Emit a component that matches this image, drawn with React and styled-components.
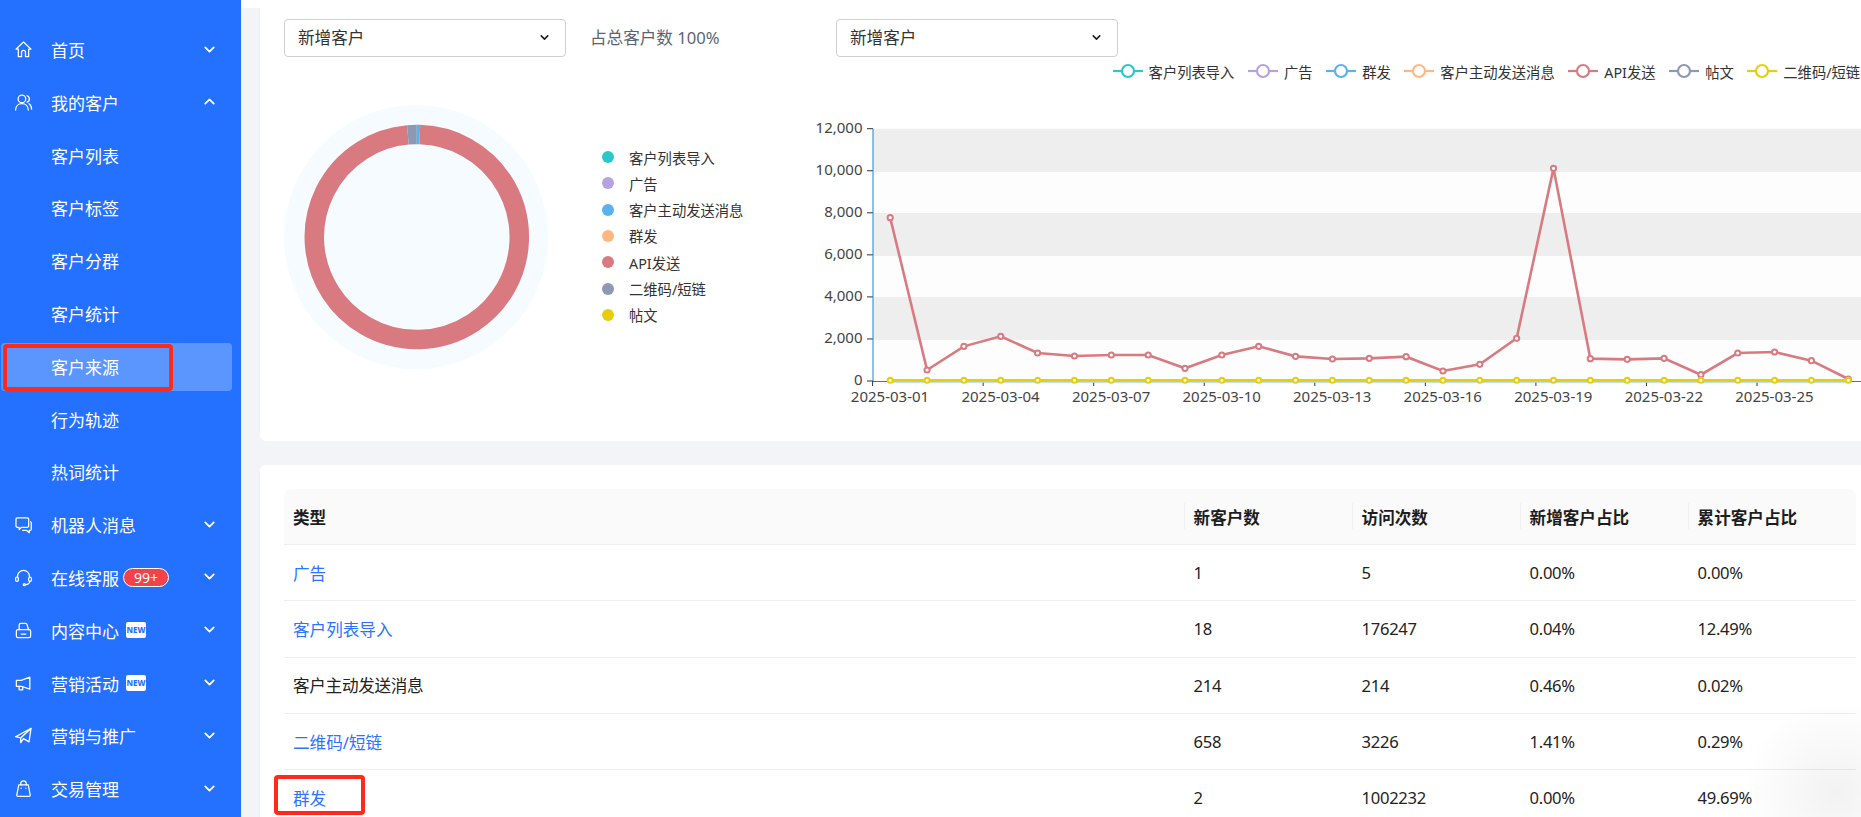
import React from "react";
import styled, { createGlobalStyle } from "styled-components";
import { ChevronDown, ChevronUp } from "lucide-react";

const FONT = `"Noto Sans", "Noto Sans CJK SC", sans-serif`;

const COLORS = {
  teal: "#2ec7c9",
  purple: "#b6a2de",
  blue: "#5ab1ef",
  orange: "#ffb980",
  red: "#d87a80",
  slate: "#8d98b3",
  yellow: "#e5cf0d",
};

const Icon = ({ children }) => (
  <IconSvg viewBox="0 0 24 24" fill="none" stroke="#fff" strokeWidth="1.6" strokeLinejoin="round" strokeLinecap="round">
    {children}
  </IconSvg>
);

const menu = [
  {
    label: "首页",
    icon: <path d="M2.5 11.5 12 2.5l9.5 9H18.500V21h-4v-5.500a2.500 2.500 0 0 0-5 0V21h-4v-9.500z" />,
    arrow: "down",
  },
  {
    label: "我的客户",
    icon: (
      <>
        <circle cx="10" cy="7.500" r="4.800" />
        <path d="M2 21.500c0-5 3.500-8 8-8s8 3 8 8M16.500 3.500a4.200 4.200 0 0 1 0 8M19 13.500c2 1.200 3.200 4 3.200 7" />
      </>
    ),
    arrow: "up",
  },
  { label: "客户列表" },
  { label: "客户标签" },
  { label: "客户分群" },
  { label: "客户统计" },
  { label: "客户来源", active: true },
  { label: "行为轨迹" },
  { label: "热词统计" },
  {
    label: "机器人消息",
    icon: (
      <>
        <path d="M4 3.500h13a1.500 1.500 0 0 1 1.500 1.500v9a1.500 1.500 0 0 1-1.500 1.500H9.500L6.500 18.500v-3H4A1.500 1.500 0 0 1 2.500 14V5A1.500 1.500 0 0 1 4 3.500z" />
        <path d="M21 8.500c.5.300.8.800.8 1.300V18c0 .8-.7 1.500-1.500 1.500h-1v2.800l-3.300-2.800h-5" />
      </>
    ),
    arrow: "down",
  },
  {
    label: "在线客服",
    icon: (
      <>
        <path d="M4.500 12V10.500a7.500 7.500 0 0 1 15 0V12" />
        <rect x="2" y="11.500" width="3.500" height="5.500" rx="1.700" />
        <rect x="18.500" y="11.500" width="3.500" height="5.500" rx="1.700" />
        <path d="M20 17c-.5 2.500-2.500 4-5.500 4" />
        <circle cx="13" cy="21" r="1.300" />
      </>
    ),
    arrow: "down",
    badge: "99+",
  },
  {
    label: "内容中心",
    icon: (
      <>
        <path d="M6.500 11V5a2 2 0 0 1 2-2h6a2 2 0 0 1 2 1.500L18.500 11" />
        <rect x="3" y="11" width="18" height="10" rx="2" />
        <path d="M9 16.500h6" />
      </>
    ),
    arrow: "down",
    isNew: true,
  },
  {
    label: "营销活动",
    icon: (
      <>
        <path d="M3 8h6l11-4v15l-11-3.500H3z" />
        <path d="M6.500 15.500V20h4.500v-4" />
      </>
    ),
    arrow: "down",
    isNew: true,
  },
  {
    label: "营销与推广",
    icon: (
      <>
        <path d="M21.500 3 2 13.500l6.500 1.500z" />
        <path d="M21.500 3 19 20l-7-4-3.500 5v-6z" />
      </>
    ),
    arrow: "down",
  },
  {
    label: "交易管理",
    icon: (
      <>
        <path d="M6 7.500h12l2.500 13a1.500 1.500 0 0 1-1.500 1.500H5a1.500 1.500 0 0 1-1.500-1.500z" />
        <path d="M8.500 7.500V6a3.500 3.500 0 0 1 7 0v1.500M9 11.500v.2M15 11.500v.2" />
      </>
    ),
    arrow: "down",
  },
];

const pieLegend = [
  ["客户列表导入", COLORS.teal],
  ["广告", COLORS.purple],
  ["客户主动发送消息", COLORS.blue],
  ["群发", COLORS.orange],
  ["API发送", COLORS.red],
  ["二维码/短链", COLORS.slate],
  ["帖文", COLORS.yellow],
];

const lineLegend = [
  ["客户列表导入", COLORS.teal],
  ["广告", COLORS.purple],
  ["群发", COLORS.blue],
  ["客户主动发送消息", COLORS.orange],
  ["API发送", COLORS.red],
  ["帖文", COLORS.slate],
  ["二维码/短链", COLORS.yellow],
];

const apiData = [
  7767, 523, 1648, 2124, 1331, 1189, 1236, 1236, 602, 1236, 1648, 1173, 1046, 1078, 1157, 475, 792, 2029, 10113, 1062,
  1030, 1078, 301, 1331, 1379, 967, 95,
];

const rows = [
  { type: "广告", link: true, cells: ["1", "5", "0.00%", "0.00%"] },
  { type: "客户列表导入", link: true, cells: ["18", "176247", "0.04%", "12.49%"] },
  { type: "客户主动发送消息", cells: ["214", "214", "0.46%", "0.02%"] },
  { type: "二维码/短链", link: true, cells: ["658", "3226", "1.41%", "0.29%"] },
  { type: "群发", link: true, marked: true, cells: ["2", "1002232", "0.00%", "49.69%"] },
];

const Y0 = 381;
const YTOP = 128.7;
const PX = (i) => 890.2 + i * 36.85;
const PY = (v) => Y0 - (v / 12000) * (Y0 - YTOP);
const DATES = ["01", "04", "07", "10", "13", "16", "19", "22", "25"];

const Donut = () => {
  const cx = 132.8;
  const cy = 132;
  const r = 102.5;
  const arc = (a0, a1) => {
    const p = (a) => [cx + r * Math.sin((a * Math.PI) / 180), cy - r * Math.cos((a * Math.PI) / 180)];
    const [x0, y0] = p(a0);
    const [x1, y1] = p(a1);
    return `M${x0} ${y0}A${r} ${r} 0 ${a1 - a0 > 180 ? 1 : 0} 1 ${x1} ${y1}`;
  };
  return (
    <DonutSvg viewBox="0 0 264 264">
      <circle cx="132" cy="132" r="132" fill="#f5fbff" />
      <path d={arc(1.7, 355)} stroke={COLORS.red} strokeWidth="19.500" fill="none" />
      <path d={arc(355, 360)} stroke={COLORS.slate} strokeWidth="19.500" fill="none" />
      <path d={arc(0, 1.7)} stroke={COLORS.blue} strokeWidth="19.500" fill="none" />
    </DonutSvg>
  );
};

const LineChart = () => {
  const bands = [
    [128.7, 172, "#eeeeee"],
    [172, 213, "#fdfdfd"],
    [213, 256, "#eeeeee"],
    [256, 297, "#fdfdfd"],
    [297, 340, "#eeeeee"],
    [340, 381, "#fdfdfd"],
  ];
  return (
    <ChartSvg viewBox="800 100 1061 320">
      {bands.map(([y0, y1, c]) => (
        <rect key={y0} x="873" y={y0} width="990" height={y1 - y0} fill={c} />
      ))}
      {[0, 2000, 4000, 6000, 8000, 10000, 12000].map((v) => (
        <g key={v}>
          <line x1="867" x2="873" y1={PY(v)} y2={PY(v)} stroke="#333" />
          <AxisText x="862.500" y={PY(v) + 4} textAnchor="end">
            {v.toLocaleString("en-US")}
          </AxisText>
        </g>
      ))}
      <line x1="873" x2="873" y1={YTOP} y2={Y0} stroke="#1a87c9" strokeWidth="1" />
      <line x1="873" x2="1861" y1={Y0 + 0.5} y2={Y0 + 0.5} stroke="#1a87c9" strokeWidth="1" />
      {DATES.map((d, i) => (
        <g key={d}>
          <line x1={872.6 + i * 110.55} x2={872.6 + i * 110.55} y1={Y0} y2={Y0 + 5} stroke="#333" />
          <AxisText x={890 + i * 110.55} y="402" textAnchor="middle">
            2025-03-{d}
          </AxisText>
        </g>
      ))}
      <polyline
        points={apiData.map((v, i) => `${PX(i)},${PY(v)}`).join(" ")}
        fill="none"
        stroke={COLORS.red}
        strokeWidth="2.600"
      />
      {apiData.map((v, i) => (
        <circle key={i} cx={PX(i)} cy={PY(v)} r="2.600" fill="#fff" stroke={COLORS.red} strokeWidth="2" />
      ))}
      <line x1={PX(0)} x2={PX(26)} y1="381.800" y2="381.800" stroke="#a9d8f5" strokeWidth="2" />
      <line x1={PX(0)} x2={PX(26)} y1="380.300" y2="380.300" stroke={COLORS.yellow} strokeWidth="2.800" />
      {apiData.map((_, i) => (
        <circle key={i} cx={PX(i)} cy="380.300" r="2.500" fill="#fff" stroke={COLORS.yellow} strokeWidth="2" />
      ))}
    </ChartSvg>
  );
};

const App = () => {
  return (
    <>
      <GlobalStyle />
      <Page>
        <Sidebar>
          {menu.map((item) => (
            <MenuItem key={item.label} $active={item.active}>
              <IconSlot>{item.icon && <Icon>{item.icon}</Icon>}</IconSlot>
              <MenuLabel>{item.label}</MenuLabel>
              {item.badge && <CountBadge>{item.badge}</CountBadge>}
              {item.isNew && <NewTag>NEW</NewTag>}
              {item.arrow === "down" && (
                <Arrow>
                  <ChevronDown size={17} strokeWidth={2.5} />
                </Arrow>
              )}
              {item.arrow === "up" && (
                <Arrow>
                  <ChevronUp size={17} strokeWidth={2.5} />
                </Arrow>
              )}
              {item.active && <MenuMark />}
            </MenuItem>
          ))}
        </Sidebar>
        <Main>
          <ChartCard>
            <PieColumn>
              <Controls>
                <Select $width={282}>
                  新增客户
                  <ChevronDown size={13} strokeWidth={3} color="#222" />
                </Select>
                <Ratio>占总客户数 100%</Ratio>
              </Controls>
              <PieRow>
                <Donut />
                <PieLegend>
                  {pieLegend.map(([name, color]) => (
                    <PieLegendItem key={name}>
                      <Dot $color={color} />
                      {name}
                    </PieLegendItem>
                  ))}
                </PieLegend>
              </PieRow>
            </PieColumn>
            <LineColumn>
              <Select $width={282}>
                新增客户
                <ChevronDown size={13} strokeWidth={3} color="#222" />
              </Select>
              <LineLegend>
                {lineLegend.map(([name, color]) => (
                  <LineLegendItem key={name}>
                    <svg width="30" height="16" viewBox="0 0 30 16">
                      <line x1="0" x2="30" y1="8" y2="8" stroke={color} strokeWidth="2.200" />
                      <circle cx="15" cy="8" r="6" fill="#fff" stroke={color} strokeWidth="2.200" />
                    </svg>
                    {name}
                  </LineLegendItem>
                ))}
              </LineLegend>
              <LineChart />
            </LineColumn>
          </ChartCard>
          <TableCard>
            <Table>
              <colgroup>
                <col style={{ width: 899.6 }} />
                <col />
                <col />
                <col />
                <col />
              </colgroup>
              <thead>
                <tr>
                  <Th>类型</Th>
                  <Th $split>新客户数</Th>
                  <Th $split>访问次数</Th>
                  <Th $split>新增客户占比</Th>
                  <Th $split>累计客户占比</Th>
                </tr>
              </thead>
              <tbody>
                {rows.map((r) => (
                  <tr key={r.type}>
                    <Td $link={r.link}>
                      {r.type}
                      {r.marked && <RowMark />}
                    </Td>
                    {r.cells.map((c, i) => (
                      <Td key={i}>{c}</Td>
                    ))}
                  </tr>
                ))}
              </tbody>
            </Table>
            <CornerGlow />
          </TableCard>
        </Main>
      </Page>
    </>
  );
};

const GlobalStyle = createGlobalStyle`
  html, body {
    margin: 0;
    padding: 0;
    height: 100%;
    overflow: hidden;
    font-family: ${FONT};
  }
  #root {
    height: 100%;
  }
`;

const Page = styled.div`
  display: flex;
  width: 1861px;
  height: 817px;
  overflow: hidden;
`;

const Sidebar = styled.aside`
  flex: 0 0 241px;
  box-sizing: border-box;
  padding-top: 26.5px;
  background: #2470ff;
  overflow: hidden;
`;

const MenuItem = styled.div`
  position: relative;
  display: flex;
  align-items: center;
  box-sizing: border-box;
  height: 48px;
  margin: 0 9px 4.8px 1px;
  padding: 0 0 2px 13px;
  border-radius: 4px;
  color: #fff;
  background: ${(p) => (p.$active ? "#5b96ff" : "transparent")};
`;

const IconSlot = styled.span`
  display: flex;
  flex: 0 0 19px;
  height: 19px;
  margin-right: 18px;
`;

const IconSvg = styled.svg`
  width: 19px;
  height: 19px;
`;

const MenuLabel = styled.span`
  font-size: 17px;
`;

const CountBadge = styled.span`
  box-sizing: border-box;
  width: 46px;
  height: 19px;
  margin-left: 4px;
  border: 1px solid #fff;
  border-radius: 10px;
  background: #f5424a;
  color: #fff;
  font-size: 14px;
  line-height: 17px;
  text-align: center;
`;

const NewTag = styled.span`
  width: 20px;
  height: 16px;
  margin-left: 7px;
  border-radius: 2px;
  background: #fff;
  color: #2470ff;
  font-size: 8px;
  font-weight: 800;
  line-height: 16px;
  text-align: center;
`;

const Arrow = styled.span`
  position: absolute;
  left: 200px;
  top: 14px;
  display: flex;
`;

const MenuMark = styled.span`
  position: absolute;
  left: 2px;
  top: 1px;
  box-sizing: border-box;
  width: 170px;
  height: 47px;
  border: 4px solid #ff2a1a;
  border-radius: 4px;
`;

const Main = styled.main`
  flex: 1;
  min-width: 0;
  display: flex;
  flex-direction: column;
  gap: 24px;
  padding-left: 19px;
  background: linear-gradient(#fff 8px, #f3f4f8 8px);
`;

const ChartCard = styled.section`
  display: flex;
  flex: 0 0 441px;
  box-sizing: border-box;
  padding: 19px 0 0 24px;
  background: #fff;
  border-bottom-left-radius: 6px;
  overflow: hidden;
`;

const PieColumn = styled.div`
  flex: 0 0 552px;
`;

const Controls = styled.div`
  display: flex;
  align-items: center;
`;

const Select = styled.div`
  display: flex;
  align-items: center;
  justify-content: space-between;
  box-sizing: border-box;
  width: ${(p) => p.$width}px;
  height: 38px;
  padding: 0 14px 2px 13px;
  border: 1px solid #cfd0d4;
  border-radius: 4px;
  background: #fff;
  color: #333;
  font-size: 16.6px;
`;

const Ratio = styled.span`
  margin-left: 24px;
  padding-bottom: 2px;
  color: #5a6474;
  font-size: 16.6px;
`;

const PieRow = styled.div`
  display: flex;
  align-items: center;
  margin-top: 48px;
`;

const DonutSvg = styled.svg`
  flex: 0 0 264px;
  width: 264px;
  height: 264px;
`;

const PieLegend = styled.ul`
  margin: -2px 0 0 54px;
  padding: 0;
  list-style: none;
`;

const PieLegendItem = styled.li`
  display: flex;
  align-items: center;
  height: 26.3px;
  color: #333;
  font-size: 14.3px;
  white-space: nowrap;
`;

const Dot = styled.i`
  width: 12px;
  height: 12px;
  margin-right: 15px;
  border-radius: 50%;
  background: ${(p) => p.$color};
`;

const LineColumn = styled.div`
  flex: 1;
  min-width: 0;
`;

const LineLegend = styled.div`
  display: flex;
  gap: 13.6px;
  height: 20px;
  margin: 4px 0 0 276.6px;
  white-space: nowrap;
`;

const LineLegendItem = styled.div`
  display: flex;
  align-items: center;
  gap: 6px;
  flex: none;
  color: #333;
  font-size: 14.3px;
`;

const ChartSvg = styled.svg`
  display: block;
  width: 1061px;
  height: 320px;
  margin: 19px 0 0 -36px;
`;

const AxisText = styled.text`
  fill: #444;
  font-family: ${FONT};
  font-size: 15px;
`;

const TableCard = styled.section`
  position: relative;
  flex: 1;
  box-sizing: border-box;
  padding: 24px 0 0 24px;
  background: #fff;
  border-top-left-radius: 6px;
  overflow: hidden;
`;

const Table = styled.table`
  width: 1571.6px;
  table-layout: fixed;
  border-collapse: separate;
  border-spacing: 0;
`;

const Th = styled.th`
  position: relative;
  box-sizing: border-box;
  height: 56px;
  padding: 0 10px;
  border-bottom: 1px solid #eeeeee;
  background: #fafafa;
  color: #1d1d1d;
  font-size: 16.6px;
  font-weight: 700;
  text-align: left;

  &:first-child {
    padding-left: 9px;
    border-top-left-radius: 8px;
  }
  &:last-child {
    border-top-right-radius: 8px;
  }
  ${(p) =>
    p.$split &&
    `&::before {
      content: "";
      position: absolute;
      left: 0;
      top: 14px;
      width: 1px;
      height: 26px;
      background: #f0f0f0;
    }`}
`;

const Td = styled.td`
  position: relative;
  box-sizing: border-box;
  height: 56.3px;
  padding: 0 10px;
  border-bottom: 1px solid #eeeeee;
  color: ${(p) => (p.$link ? "#2b74ff" : "#222")};
  font-size: 16.6px;
  letter-spacing: ${(p) => (p.$link ? "0" : "-0.3px")};

  &:first-child {
    padding-left: 9px;
  }
`;

const RowMark = styled.span`
  position: absolute;
  left: -10px;
  top: 5px;
  box-sizing: border-box;
  width: 91px;
  height: 40px;
  border: 4px solid #ff2a1a;
  border-radius: 4px;
`;

const CornerGlow = styled.div`
  position: absolute;
  right: -70px;
  bottom: -70px;
  width: 190px;
  height: 190px;
  background: radial-gradient(circle, rgba(0, 0, 0, 0.05), rgba(0, 0, 0, 0) 70%);
`;

export default App;
